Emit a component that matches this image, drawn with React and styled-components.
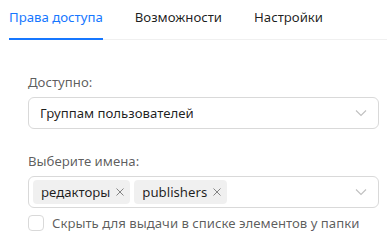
import React from 'react';
import styled, { createGlobalStyle } from 'styled-components';

const GlobalStyle = createGlobalStyle`
  body {
    margin: 0;
    background: #fff;
    font-family: "Noto Sans", "Open Sans", sans-serif;
    font-size: 13.2px;
    color: rgba(0, 0, 0, 0.88);
  }
`;

const Page = styled.div`
  width: 387px;
  height: 240px;
  overflow: hidden;
`;

const TabNav = styled.div`
  display: flex;
  gap: 32px;
  margin-left: 9px;
  border-bottom: 1px solid #f0f0f0;
`;

const Tab = styled.div`
  padding: 6px 0 10px;
  line-height: 22px;
  color: ${(p) => (p.$active ? '#1677ff' : 'rgba(0, 0, 0, 0.88)')};
  border-bottom: 2px solid ${(p) => (p.$active ? '#1677ff' : 'transparent')};
  margin-bottom: -1px;
  white-space: nowrap;
`;

const Form = styled.div`
  padding: 31px 8px 0 28px;
  display: flex;
  flex-direction: column;
`;

const Field = styled.div`
  margin-bottom: ${(p) => p.$gap || 0}px;
`;

const Label = styled.div`
  line-height: 22px;
  margin-bottom: 4px;
  color: rgba(0, 0, 0, 0.65);
`;

const SelectBox = styled.div`
  position: relative;
  display: flex;
  align-items: center;
  height: 32px;
  box-sizing: border-box;
  border: 1px solid #d9d9d9;
  border-radius: 6px;
  padding: ${(p) => (p.$multi ? '1px 4px' : '0 11px')};
  gap: 4px;
`;

const Value = styled.span`
  line-height: 22px;
`;

const Arrow = styled.svg`
  position: absolute;
  right: 11px;
  top: 50%;
  margin-top: -6px;
  width: 12px;
  height: 12px;
`;

const Tag = styled.span`
  display: inline-flex;
  align-items: center;
  height: 24px;
  box-sizing: border-box;
  padding: 0 5px 0 8px;
  background: rgba(0, 0, 0, 0.06);
  border-radius: 4px;
  line-height: 22px;
  gap: 5px;
`;

const CheckRow = styled.label`
  display: flex;
  align-items: center;
  gap: 8px;
  margin-top: 4px;
  line-height: 22px;
  color: rgba(0, 0, 0, 0.65);
  white-space: nowrap;
`;

const CheckBox = styled.span`
  width: 16px;
  height: 16px;
  box-sizing: border-box;
  border: 1px solid #d9d9d9;
  border-radius: 4px;
  flex: none;
`;

const Chevron = () => (
  <Arrow viewBox="0 0 12 12" fill="none">
    <path d="M1 3.5 L6 8.5 L11 3.5" stroke="rgba(0,0,0,0.25)" strokeWidth="1.1" />
  </Arrow>
);

const Close = () => (
  <svg width="10" height="10" viewBox="0 0 10 10">
    <path d="M1.5 1.5 L8.5 8.5 M8.5 1.5 L1.5 8.5" stroke="rgba(0,0,0,0.45)" strokeWidth="1" />
  </svg>
);

export default function App() {
  return (
    <Page>
      <GlobalStyle />
      <TabNav>
        <Tab $active>Права доступа</Tab>
        <Tab>Возможности</Tab>
        <Tab>Настройки</Tab>
      </TabNav>
      <Form>
        <Field $gap={21}>
          <Label>Доступно:</Label>
          <SelectBox>
            <Value>Группам пользователей</Value>
            <Chevron />
          </SelectBox>
        </Field>
        <Field>
          <Label>Выберите имена:</Label>
          <SelectBox $multi>
            <Tag>редакторы <Close /></Tag>
            <Tag>publishers <Close /></Tag>
            <Chevron />
          </SelectBox>
        </Field>
        <CheckRow>
          <CheckBox />
          Скрыть для выдачи в списке элементов у папки
        </CheckRow>
      </Form>
    </Page>
  );
}
